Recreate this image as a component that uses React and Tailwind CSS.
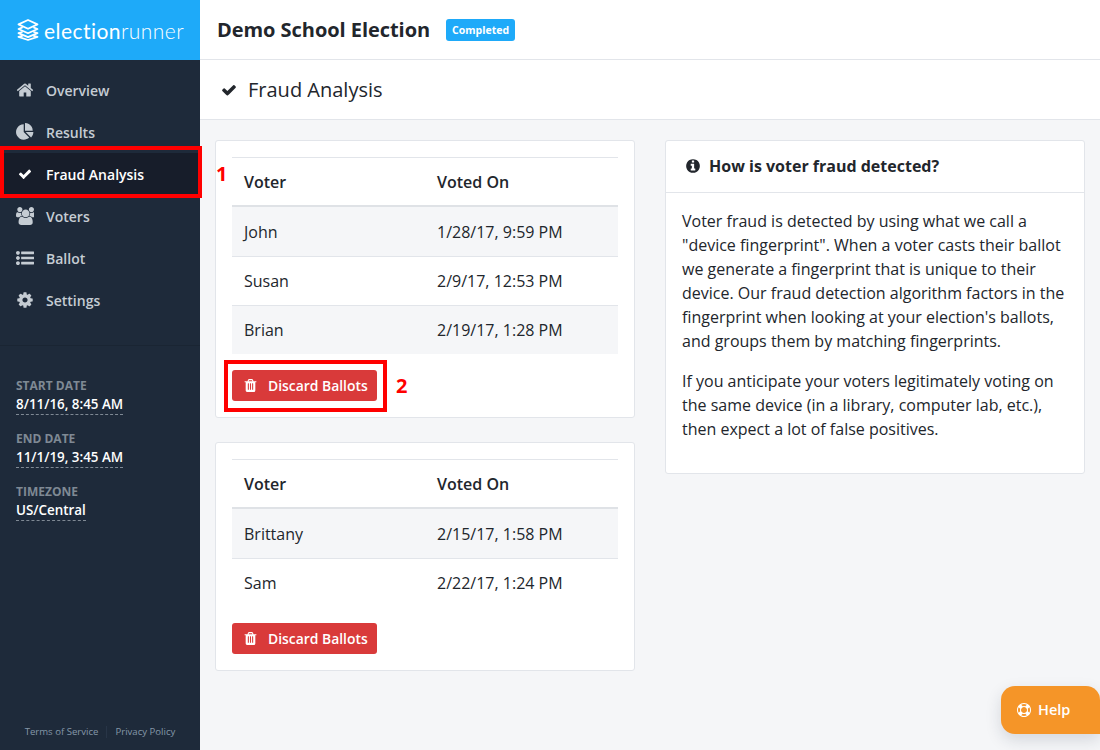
const paths = {
  home: "M1472 992v480q0 26-19 45t-45 19h-384v-384h-256v384h-384q-26 0-45-19t-19-45v-480q0-1 .5-3t.5-3l575-474 575 474q1 2 1 6zm223-69l-62 74q-8 9-21 11h-3q-13 0-21-7l-692-577-692 577q-12 8-24 7-13-2-21-11l-62-74q-8-10-7-23.5t11-21.5l719-599q32-26 76-26t76 26l244 204v-195q0-14 9-23t23-9h192q14 0 23 9t9 23v408l219 182q10 8 11 21.5t-7 23.5z",
  pie: "M768 890l546 546q-106 108-247.5 168t-298.5 60q-209 0-385.5-103t-279.5-279.5-103-385.5 103-385.5 279.5-279.5 385.5-103v762zm187 6h773q0 157-60 298.5t-168 247.5zm709-128h-768v-768q209 0 385.5 103t279.5 279.5 103 385.5z",
  check: "M1671 566q0 40-28 68l-724 724-136 136q-28 28-68 28t-68-28l-136-136-362-362q-28-28-28-68t28-68l136-136q28-28 68-28t68 28l294 295 656-657q28-28 68-28t68 28l136 136q28 28 28 68z",
  users: "M593 896q-162 5-265 128h-134q-82 0-138-40.5t-56-118.5q0-353 124-353 6 0 43.5 21t97.5 42.5 119 21.5q67 0 133-23-5 37-5 66 0 139 81 256zm1071 637q0 120-73 189.5t-194 69.5h-874q-121 0-194-69.5t-73-189.5q0-53 3.5-103.5t14-109 26.5-108.5 43-97.5 62-81 85.5-53.5 111.5-20q10 0 43 21.5t73 48 107 48 135 21.5 135-21.5 107-48 73-48 43-21.5q61 0 111.5 20t85.5 53.5 62 81 43 97.5 26.5 108.5 14 109 3.5 103.5zm-1024-1277q0 106-75 181t-181 75-181-75-75-181 75-181 181-75 181 75 75 181zm704 384q0 159-112.5 271.5t-271.5 112.5-271.5-112.5-112.5-271.5 112.5-271.5 271.5-112.5 271.5 112.5 112.5 271.5zm576 225q0 78-56 118.5t-138 40.5h-134q-103-123-265-128 81-117 81-256 0-29-5-66 66 23 133 23 59 0 119-21.5t97.5-42.5 43.5-21q124 0 124 353zm-128-609q0 106-75 181t-181 75-181-75-75-181 75-181 181-75 181 75 75 181z",
  list: "M384 1408q0 80-56 136t-136 56-136-56-56-136 56-136 136-56 136 56 56 136zm0-512q0 80-56 136t-136 56-136-56-56-136 56-136 136-56 136 56 56 136zm1408 416v192q0 13-9.5 22.5t-22.5 9.5h-1216q-13 0-22.5-9.5t-9.5-22.5v-192q0-13 9.5-22.5t22.5-9.5h1216q13 0 22.5 9.5t9.5 22.5zm-1408-928q0 80-56 136t-136 56-136-56-56-136 56-136 136-56 136 56 56 136zm1408 416v192q0 13-9.5 22.5t-22.5 9.5h-1216q-13 0-22.5-9.5t-9.5-22.5v-192q0-13 9.5-22.5t22.5-9.5h1216q13 0 22.5 9.5t9.5 22.5zm0-512v192q0 13-9.5 22.5t-22.5 9.5h-1216q-13 0-22.5-9.5t-9.5-22.5v-192q0-13 9.5-22.5t22.5-9.5h1216q13 0 22.5 9.5t9.5 22.5z",
  cog: "M1152 896q0-106-75-181t-181-75-181 75-75 181 75 181 181 75 181-75 75-181zm512-109v222q0 12-8 23t-20 13l-185 28q-19 54-39 91 35 50 107 138 10 12 10 25t-9 23q-27 37-99 108t-94 71q-12 0-26-9l-138-108q-44 23-91 38-16 136-29 186-7 28-36 28h-222q-14 0-24.5-8.5t-11.5-21.5l-28-184q-49-16-90-37l-141 107q-10 9-25 9-14 0-25-11-126-114-165-168-7-10-7-23 0-12 8-23 15-21 51-66.5t54-70.5q-27-50-41-99l-183-27q-13-2-21-12.5t-8-23.5v-222q0-12 8-23t19-13l186-28q14-46 39-92-40-57-107-138-10-12-10-24 0-10 9-23 26-36 98.5-107.5t94.5-71.5q13 0 26 10l138 107q44-23 91-38 16-136 29-186 7-28 36-28h222q14 0 24.5 8.5t11.5 21.5l28 184q49 16 90 37l142-107q9-9 24-9 13 0 25 10 129 119 165 170 7 8 7 22 0 12-8 23-15 21-51 66.5t-54 70.5q26 50 41 98l183 28q13 2 21 12.5t8 23.5z",
  ring: "M896 0q182 0 348 71t286 191 191 286 71 348-71 348-191 286-286 191-348 71-348-71-286-191-191-286-71-348 71-348 191-286 286-191 348-71zm0 128q-190 0-361 90l194 194q82-28 167-28t167 28l194-194q-171-90-361-90zm-678 1129l194-194q-28-82-28-167t28-167l-194-194q-90 171-90 361t90 361zm678 407q190 0 361-90l-194-194q-82 28-167 28t-167-28l-194 194q171 90 361 90zm0-384q159 0 271.5-112.5t112.5-271.5-112.5-271.5-271.5-112.5-271.5 112.5-112.5 271.5 112.5 271.5 271.5 112.5zm484-217l194 194q90-171 90-361t-90-361l-194 194q28 82 28 167t-28 167z",
  trash: "M704 1376v-704q0-14-9-23t-23-9h-64q-14 0-23 9t-9 23v704q0 14 9 23t23 9h64q14 0 23-9t9-23zm256 0v-704q0-14-9-23t-23-9h-64q-14 0-23 9t-9 23v704q0 14 9 23t23 9h64q14 0 23-9t9-23zm256 0v-704q0-14-9-23t-23-9h-64q-14 0-23 9t-9 23v704q0 14 9 23t23 9h64q14 0 23-9t9-23zm-544-992h448l-48-117q-7-9-17-11h-317q-10 2-17 11zm928 32v64q0 14-9 23t-23 9h-96v948q0 83-47 143.5t-113 60.5h-832q-66 0-113-58.5t-47-141.5v-952h-96q-14 0-23-9t-9-23v-64q0-14 9-23t23-9h309l70-167q15-37 54-63t79-26h320q40 0 79 26t54 63l70 167h309q14 0 23 9t9 23z",
  info: "M1152 1376v-160q0-14-9-23t-23-9h-96v-512q0-14-9-23t-23-9h-320q-14 0-23 9t-9 23v160q0 14 9 23t23 9h96v320h-96q-14 0-23 9t-9 23v160q0 14 9 23t23 9h448q14 0 23-9t9-23zm-128-896v-160q0-14-9-23t-23-9h-192q-14 0-23 9t-9 23v160q0 14 9 23t23 9h192q14 0 23-9t9-23zm640 416q0 209-103 385.5t-279.5 279.5-385.5 103-385.5-103-279.5-279.5-103-385.5 103-385.5 279.5-279.5 385.5-103 385.5 103 279.5 279.5 103 385.5z",
};

function Icon({ name, size }) {
  return (
    <svg width={size} height={size} viewBox="0 0 1792 1792" fill="currentColor" className="shrink-0">
      <path d={paths[name]} />
    </svg>
  );
}

const menu = [
  { name: "Overview", icon: "home", size: 18 },
  { name: "Results", icon: "pie", size: 18 },
  { name: "Fraud Analysis", icon: "check", size: 14, active: true },
  { name: "Voters", icon: "users", size: 18 },
  { name: "Ballot", icon: "list", size: 18 },
  { name: "Settings", icon: "cog", size: 18 },
];

const dates = [
  { label: "START DATE", value: "8/11/16, 8:45 AM" },
  { label: "END DATE", value: "11/1/19, 3:45 AM" },
  { label: "TIMEZONE", value: "US/Central" },
];

const groups = [
  {
    rows: [
      ["John", "1/28/17, 9:59 PM"],
      ["Susan", "2/9/17, 12:53 PM"],
      ["Brian", "2/19/17, 1:28 PM"],
    ],
    marked: true,
  },
  {
    rows: [
      ["Brittany", "2/15/17, 1:58 PM"],
      ["Sam", "2/22/17, 1:24 PM"],
    ],
  },
];

function Logo() {
  return (
    <div className="flex h-[60px] items-center bg-[#1eaaf9] pl-[17px] text-white">
      <svg width="22" height="22" viewBox="0 0 22 22" fill="none" stroke="currentColor" strokeWidth="1.8" strokeLinejoin="round" strokeLinecap="round">
        <path d="M11 1 L20.5 5.4 L11 9.8 L1.5 5.4 Z" />
        <path d="M5 8.6 L1.5 10 L11 14.2 L20.5 10 L17 8.6" />
        <path d="M5 13 L1.5 14.2 L11 18.2 L20.5 14.2 L17 13" />
        <path d="M5 17 L1.5 17.8 L11 21 L20.5 17.8 L17 17" />
      </svg>
      <span className="ml-[5px] font-['Lato',sans-serif] text-[21px] leading-none tracking-[0.45px]">
        election<span className="font-light">runner</span>
      </span>
    </div>
  );
}

function Sidebar() {
  return (
    <aside className="flex w-[200px] shrink-0 flex-col bg-[#1e2a3a]">
      <Logo />
      <nav className="border-b border-[#1a2533] pt-[9px] pb-[24px]">
        {menu.map((item) => (
          <a
            key={item.name}
            href="#"
            className={
              item.active
                ? "flex h-[42px] items-center bg-[#171d2a] pl-[16px] text-[14px] font-semibold text-white"
                : "flex h-[42px] items-center pl-[16px] text-[14px] font-semibold text-[#c5ccd3]"
            }
          >
            <span className="flex w-[18px] justify-center">
              <Icon name={item.icon} size={item.size} />
            </span>
            <span className="ml-[12px]">{item.name}</span>
          </a>
        ))}
      </nav>
      <div className="px-[16px] pt-[32px]">
        {dates.map((d) => (
          <div key={d.label} className="mb-[16px]">
            <div className="text-[12px] leading-[16px] font-bold text-[#7f8994]">{d.label}</div>
            <div className="mt-[1px] w-fit border-b border-dashed border-[#7f8994] pb-[1px] text-[13.4px] leading-[18px] font-semibold text-white">
              {d.value}
            </div>
          </div>
        ))}
      </div>
      <div className="mt-auto flex items-center justify-center pb-[11px] text-[9.6px] text-[#8497a8]">
        <span>Terms of Service</span>
        <span className="mx-[8px] h-[12px] border-l border-[#283547]" />
        <span>Privacy Policy</span>
      </div>
    </aside>
  );
}

function VoterCard({ rows, marked }) {
  return (
    <div className="rounded-[3px] border border-[#e2e5ea] bg-white p-[16px]">
      <table className="w-full border-separate border-spacing-0 text-[16px] text-[#22262c]">
        <thead>
          <tr className="text-left">
            <th className="h-[50px] w-[193px] border-t border-b-2 border-t-[#e2e5ea] border-b-[#dfe2e6] px-[12px] font-semibold">Voter</th>
            <th className="h-[50px] border-t border-b-2 border-t-[#e2e5ea] border-b-[#dfe2e6] px-[12px] font-semibold">Voted On</th>
          </tr>
        </thead>
        <tbody>
          {rows.map((r, i) => (
            <tr key={r[0]} className={i % 2 === 0 ? "bg-[#f5f6f8]" : ""}>
              <td className={i === 0 ? "h-[49px] px-[12px] pt-[1px]" : "h-[49px] border-t border-[#e2e5ea] px-[12px]"}>{r[0]}</td>
              <td className={i === 0 ? "h-[49px] px-[12px] pt-[1px]" : "h-[49px] border-t border-[#e2e5ea] px-[12px]"}>{r[1]}</td>
            </tr>
          ))}
        </tbody>
      </table>
      <div className="relative mt-[16px] flex">
        <button className="flex h-[31px] w-[145px] items-center rounded-[3px] bg-[#d93a3a] pl-[11px] text-[13.9px] font-semibold text-white">
          <Icon name="trash" size={15} />
          <span className="mt-[1px] ml-[10px]">Discard Ballots</span>
        </button>
        {marked && (
          <>
            <div className="absolute top-[-10px] left-[-8px] h-[52px] w-[163px] border-[4px] border-[#ff0000]" />
            <div className="absolute top-[2px] left-[164px] text-[20px] leading-[28px] font-bold text-[#ff0000]">2</div>
          </>
        )}
      </div>
    </div>
  );
}

export default function App() {
  return (
    <div className="relative flex h-[750px] w-[1100px] overflow-hidden bg-[#f5f6f8] font-['Open_Sans',sans-serif] text-[#22262c]">
      <Sidebar />
      <main className="flex min-w-0 flex-1 flex-col">
        <header className="flex h-[60px] items-center border-b border-[#e2e5ea] bg-white pl-[17px]">
          <h1 className="text-[20px] font-bold tracking-[-0.05px] text-[#22262c]">Demo School Election</h1>
          <span className="mt-[1px] ml-[16px] rounded-[3px] bg-[#1eaaf9] px-[6px] py-[3px] text-[10.5px] leading-[16px] font-bold text-white">
            Completed
          </span>
        </header>
        <div className="flex h-[60px] items-center border-b border-[#e2e5ea] bg-white pl-[21px]">
          <Icon name="check" size={16} />
          <h2 className="ml-[11px] text-[20px]">Fraud Analysis</h2>
        </div>
        <div className="flex gap-[30px] px-[15px] pt-[20px]">
          <div className="flex w-[420px] flex-col gap-[24px]">
            {groups.map((g, i) => (
              <VoterCard key={i} rows={g.rows} marked={g.marked} />
            ))}
          </div>
          <section className="h-[334px] w-[420px] rounded-[3px] border border-[#e2e5ea] bg-white">
            <div className="flex h-[52px] items-center border-b border-[#e2e5ea] pb-[2px] pl-[19px]">
              <Icon name="info" size={16} />
              <h3 className="ml-[8px] text-[16px] font-bold">How is voter fraud detected?</h3>
            </div>
            <div className="px-[16px] pt-[16px] text-[16px] leading-[24px]">
              <p>
                Voter fraud is detected by using what we call a "device fingerprint". When a voter casts their ballot we
                generate a fingerprint that is unique to their device. Our fraud detection algorithm factors in the
                fingerprint when looking at your election's ballots, and groups them by matching fingerprints.
              </p>
              <p className="mt-[16px]">
                If you anticipate your voters legitimately voting on the same device (in a library, computer lab, etc.),
                then expect a lot of false positives.
              </p>
            </div>
          </section>
        </div>
      </main>

      {/* annotation over the active menu item */}
      <div className="absolute top-[146px] left-0 h-[52px] w-[202px] border-[4px] border-[#ff0000]" />
      <div className="absolute top-[160px] left-[216px] text-[20px] leading-[28px] font-bold text-[#ff0000]">1</div>

      <button className="absolute top-[686px] right-0 flex h-[48px] w-[99px] items-center rounded-l-[14px] rounded-tr-[14px] bg-[#f59528] pl-[16px] text-[14.5px] font-semibold text-white shadow-[0_6px_16px_rgba(30,42,58,0.15)]">
        <Icon name="ring" size={14} />
        <span className="ml-[7px]">Help</span>
      </button>
    </div>
  );
}
